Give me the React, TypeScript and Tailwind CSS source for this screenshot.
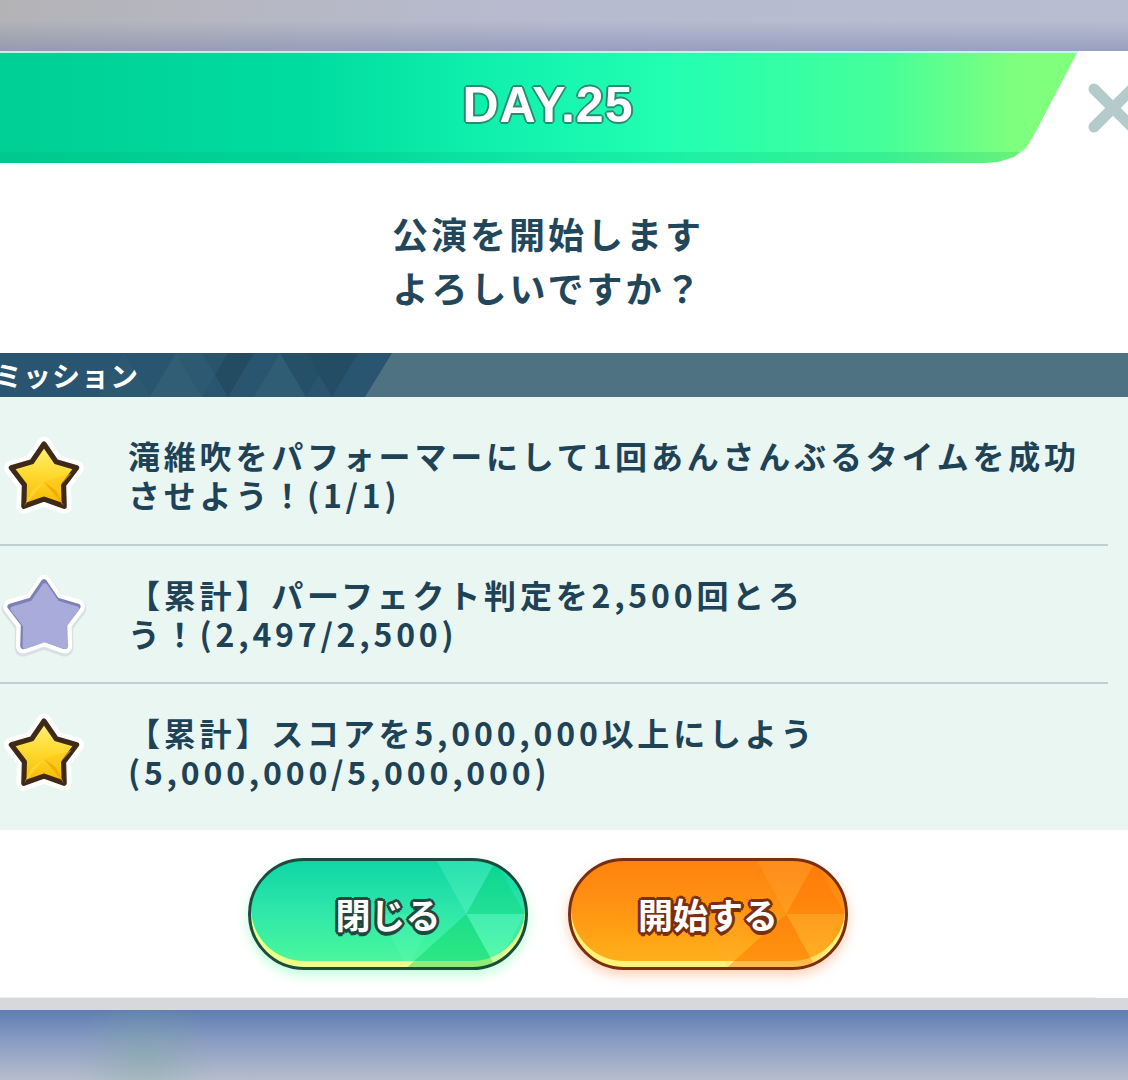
import React from "react";

type StarKind = "gold" | "gray";

function starPoints(cx: number, cy: number, R: number, r: number) {
  const pts: string[] = [];
  for (let i = 0; i < 10; i++) {
    const rad = i % 2 === 0 ? R : r;
    const a = (Math.PI / 5) * i - Math.PI / 2;
    pts.push(`${(cx + rad * Math.cos(a)).toFixed(1)},${(cy + rad * Math.sin(a)).toFixed(1)}`);
  }
  return pts.join(" ");
}

const Star: React.FC<{ kind: StarKind }> = ({ kind }) => {
  const pts = starPoints(50, 54, 40, 24);
  if (kind === "gray") {
    return (
      <svg viewBox="0 0 100 100" className="w-[92px] h-[92px]">
        <polygon points={starPoints(50, 56, 40, 24)} fill="#c9ccd6" stroke="#c9ccd6" strokeWidth="20" strokeLinejoin="round" opacity="0.5" />
        <polygon points={pts} fill="#ffffff" stroke="#ffffff" strokeWidth="17" strokeLinejoin="round" />
        <polygon points={pts} fill="#7d80b4" stroke="#7d80b4" strokeWidth="7" strokeLinejoin="round" />
        <polygon points={starPoints(51, 56, 38, 23)} fill="#a9acdb" stroke="#a9acdb" strokeWidth="6" strokeLinejoin="round" />
      </svg>
    );
  }
  return (
    <svg viewBox="0 0 100 100" className="w-[86px] h-[86px]">
      <defs>
        <linearGradient id="goldFill" x1="0" y1="0" x2="0" y2="1">
          <stop offset="0" stopColor="#fff27a" />
          <stop offset="0.5" stopColor="#ffd92e" />
          <stop offset="1" stopColor="#f5b800" />
        </linearGradient>
      </defs>
      <polygon points={pts} fill="#ffffff" stroke="#ffffff" strokeWidth="17" strokeLinejoin="round" />
      <polygon points={pts} fill="url(#goldFill)" stroke="#3f2a18" strokeWidth="6" strokeLinejoin="round" />
      <polygon points="50,58 73,86 64,68" fill="#f0a800" opacity="0.85" />
      <polygon points="50,58 64,68 82,48" fill="#ffc21a" opacity="0.55" />
      <polygon points="50,58 27,86 36,68" fill="#ffe14a" opacity="0.5" />
    </svg>
  );
};

const Facets: React.FC<{ light: string; dark: string }> = ({ light, dark }) => (
  <svg viewBox="0 0 280 112" className="absolute inset-0 w-full h-full" preserveAspectRatio="none">
    <polygon points="190,0 250,0 220,56" fill={light} opacity="0.25" />
    <polygon points="220,56 280,56 250,0" fill={dark} opacity="0.3" />
    <polygon points="160,112 220,56 250,112" fill={dark} opacity="0.4" />
    <polygon points="220,56 280,56 250,112" fill={light} opacity="0.25" />
    <polygon points="130,56 190,56 160,112" fill={light} opacity="0.15" />
  </svg>
);

const missions: { kind: StarKind; lines: string[]; row: string }[] = [
  {
    kind: "gold",
    lines: ["滝維吹をパフォーマーにして1回あんさんぶるタイムを成功", "させよう！(1/1)"],
    row: "h-[147px] pt-[8px]",
  },
  {
    kind: "gray",
    lines: ["【累計】パーフェクト判定を2,500回とろ", "う！(2,497/2,500)"],
    row: "h-[136px]",
  },
  {
    kind: "gold",
    lines: ["【累計】スコアを5,000,000以上にしよう", "(5,000,000/5,000,000)"],
    row: "h-[146px] pb-[10px]",
  },
];

export default function App() {
  return (
    <div className="w-[1128px] h-[1080px] overflow-hidden flex flex-col font-['Noto_Sans_CJK_JP',sans-serif] bg-white">
      {/* backdrop top */}
      <div className="h-[51px] shrink-0 bg-[linear-gradient(180deg,rgba(255,255,255,0)_40%,rgba(110,125,170,0.45)_100%),linear-gradient(90deg,#b3b3b6_0%,#b6b7c2_20%,#b7bbd0_50%,#b9bdd0_100%)]" />

      {/* dialog */}
      <div className="h-[947px] shrink-0 flex flex-col bg-white">
        {/* header */}
        <div className="h-[112px] flex shrink-0 overflow-hidden">
          <div className="w-[1078px] shrink-0 h-full [clip-path:polygon(0_0,1078px_0,1034px_84px,1026px_97px,1014px_106px,998px_111px,985px_112px,0_112px)] bg-[linear-gradient(90deg,#00cf95_0%,#00dca0_28%,#10f0ad_45%,#22ffb2_62%,#45ff9a_82%,#7fff7e_94%,#80ff7c_100%)] shadow-[inset_0_-11px_0_rgba(0,170,110,0.18),inset_0_2px_0_rgba(190,255,240,0.9)] flex items-center justify-center pl-[18px] pb-[4px]">
            <span className="font-['Liberation_Sans',sans-serif] font-bold text-[50px] tracking-[1px] text-white [text-shadow:2px_0_0_#2a8a74,-2px_0_0_#2a8a74,0_2px_0_#2a8a74,0_-2px_0_#2a8a74,1px_1px_0_#2a8a74,-1px_-1px_0_#2a8a74,1px_-1px_0_#2a8a74,-1px_1px_0_#2a8a74]">
              DAY.25
            </span>
          </div>
          <div className="ml-[10px] pt-[32px] shrink-0">
            <svg viewBox="0 0 50 50" className="w-[50px] h-[50px]">
              <path d="M6 6 L44 44 M44 6 L6 44" stroke="#b3cccb" strokeWidth="11" strokeLinecap="round" />
            </svg>
          </div>
        </div>

        {/* question */}
        <div className="w-[1096px] mt-[43px] mb-[39px] flex flex-col items-center text-[36px] leading-[54px] tracking-[3px] font-bold text-[#23475a]">
          <p>公演を開始します</p>
          <p>よろしいですか？</p>
        </div>

        {/* mission header */}
        <div className="h-[44px] shrink-0 flex bg-[#4e7282]">
          <div className="relative w-[392px] h-full [clip-path:polygon(0_0,392px_0,365px_44px,0_44px)] bg-[#2a5570] flex items-center">
            <svg viewBox="0 0 392 44" className="absolute inset-0 w-full h-full">
              <polygon points="150,44 176,0 202,44" fill="#336277" opacity="0.7" />
              <polygon points="202,0 228,44 254,0" fill="#22485f" opacity="0.8" />
              <polygon points="254,44 280,0 306,44" fill="#336277" opacity="0.6" />
              <polygon points="306,0 332,44 358,0" fill="#22485f" opacity="0.7" />
              <polygon points="176,0 202,44 228,0" fill="#2f5d74" opacity="0.5" />
              <polygon points="280,0 306,44 332,0" fill="#244c63" opacity="0.6" />
              <polygon points="98,44 124,0 150,44" fill="#305e74" opacity="0.4" />
            </svg>
            <span className="relative -ml-[6px] text-[28px] font-bold tracking-[1px] text-white">ミッション</span>
          </div>
        </div>

        {/* missions */}
        <div className="h-[433px] shrink-0 bg-[#eaf6f2] flex flex-col">
          {missions.map((m, i) => (
            <div key={i} className="flex flex-col">
              <div className={`${m.row} flex items-center`}>
                <div className="w-[88px] shrink-0 flex justify-center">
                  <Star kind={m.kind} />
                </div>
                <div className="ml-[40px] text-[32px] leading-[39px] tracking-[3.8px] font-bold text-[#1e4256] whitespace-nowrap">
                  {m.lines.map((l, j) => (
                    <p key={j}>{l}</p>
                  ))}
                </div>
              </div>
              {i < missions.length - 1 && <div className="h-[2px] mr-[20px] bg-[#bcd0cf]" />}
            </div>
          ))}
        </div>

        {/* buttons */}
        <div className="flex-1 flex justify-center gap-[40px] w-[1096px] pt-[28px] border-b border-[#eef0f0]">
          <button className="relative w-[280px] h-[112px] rounded-full overflow-hidden border-[3px] border-[#1f4b3e] bg-[linear-gradient(180deg,#0fd6a6_0%,#2de6aa_45%,#40f3a0_80%,#55f59c_100%)] shadow-[inset_0_-6px_0_#eeff88,0_5px_12px_rgba(70,255,150,0.35)]">
            <Facets light="#7fffd0" dark="#00d060" />
            <span className="relative text-[35px] font-bold text-white [text-shadow:3px_0_0_#21483f,-3px_0_0_#21483f,0_3px_0_#21483f,0_-3px_0_#21483f,2px_2px_0_#21483f,-2px_-2px_0_#21483f,2px_-2px_0_#21483f,-2px_2px_0_#21483f,0_4px_0_#21483f]">
              閉じる
            </span>
          </button>
          <button className="relative w-[280px] h-[112px] rounded-full overflow-hidden border-[3px] border-[#7a2e10] bg-[linear-gradient(180deg,#ff8210_0%,#ff9412_45%,#ffa818_80%,#ffb21c_100%)] shadow-[inset_0_-6px_0_#fff27a,0_5px_12px_rgba(255,120,40,0.35)]">
            <Facets light="#ffb040" dark="#ff6a00" />
            <span className="relative text-[35px] font-bold text-white [text-shadow:3px_0_0_#7a2e12,-3px_0_0_#7a2e12,0_3px_0_#7a2e12,0_-3px_0_#7a2e12,2px_2px_0_#7a2e12,-2px_-2px_0_#7a2e12,2px_-2px_0_#7a2e12,-2px_2px_0_#7a2e12,0_4px_0_#7a2e12]">
              開始する
            </span>
          </button>
        </div>
      </div>

      {/* backdrop bottom */}
      <div className="h-[12px] shrink-0 bg-[#d6d8dc]" />
      <div className="flex-1 bg-[radial-gradient(ellipse_70px_70px_at_145px_45px,rgba(120,170,150,0.35),rgba(120,170,150,0)),linear-gradient(180deg,#5d7db3_0%,#8b9dc3_45%,#b6bdcc_100%)]" />
    </div>
  );
}
